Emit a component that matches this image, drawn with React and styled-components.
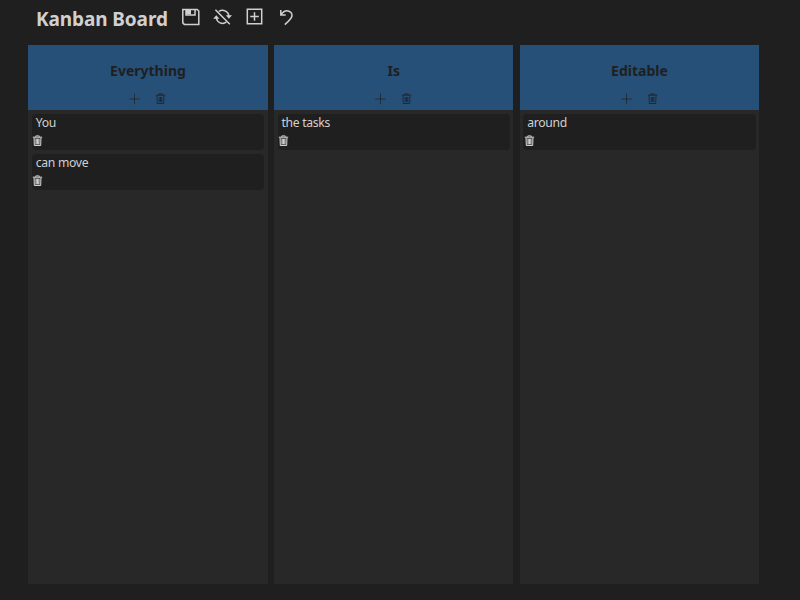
import React from "react";
import styled, { createGlobalStyle } from "styled-components";

const GlobalStyle = createGlobalStyle`
  * { box-sizing: border-box; }
  body { margin: 0; background: #1f1f1f; overflow: hidden; }
`;

const Page = styled.main`
  height: 600px;
  padding: 0 41px 0 28.4px;
  background: #1f1f1f;
  color: #d0d0d0;
  font-family: "Noto Sans", sans-serif;
`;

const Toolbar = styled.header`
  display: flex;
  align-items: flex-start;
  height: 45px;
  padding-left: 7.6px;
`;

const BoardTitle = styled.h1`
  width: 144.8px;
  margin: 0;
  padding-top: 6px;
  font-size: 19px;
  line-height: 26px;
  letter-spacing: -0.1px;
  font-weight: 700;
  white-space: nowrap;
`;

const Tools = styled.div`
  display: flex;
  gap: 11.9px;
  padding-top: 7px;
`;

const IconButton = styled.button`
  display: flex;
  padding: 0;
  border: 0;
  background: none;
  color: inherit;
`;

const Board = styled.section`
  display: grid;
  grid-template-columns: repeat(3, 1fr);
  gap: 6.6px;
  height: 539px;
`;

const Column = styled.section`
  background: #282828;
`;

const ColumnHeader = styled.header`
  display: flex;
  flex-direction: column;
  align-items: center;
  height: 65px;
  padding-top: 16px;
  background: #265078;
  color: #1f1f1f;
`;

const ColumnTitle = styled.h2`
  margin: 0;
  font-size: 14px;
  line-height: 20px;
  font-weight: 700;
`;

const ColumnActions = styled.div`
  display: flex;
  gap: 14px;
  margin-top: 12px;
`;

const TaskList = styled.div`
  display: grid;
  gap: 4px;
  padding: 4px 3.5px;
`;

const Task = styled.article`
  height: 36px;
  border-radius: 4px;
  background: #1f1f1f;
`;

const TaskText = styled.p`
  margin: 0;
  padding-left: 3.8px;
  font-size: 12.2px;
  line-height: 18px;
  letter-spacing: -0.3px;
`;

const TaskActions = styled.div`
  display: flex;
  padding: 3px 0 0 0.5px;
`;

const Drawing = styled.svg`
  display: block;
  flex: none;
  fill: none;
  stroke: currentColor;
  stroke-width: ${(p) => p.$weight || 1.5};
`;

const SaveIcon = () => (
  <Drawing width="20" height="20" viewBox="0 0 20 20">
    <path d="M1.8 2.4H16.2L17.8 4V17.4H3.3L1.8 15.9Z" />
    <path d="M5 2.4V8H14V2.4" />
    <path d="M5 2.4H10V7.4H5Z" fill="currentColor" stroke="none" />
  </Drawing>
);

const SyncOffIcon = () => (
  <Drawing width="20" height="20" viewBox="0 0 20 20" $weight={1.5}>
    <path d="M5.8 4.5A6.4 6.4 0 0 1 15.9 9M13.3 15.2A6.4 6.4 0 0 1 3.3 11M2.4 2.8L16.8 17.2" />
    <path d="M12.8 8.3H19L15.9 11.7ZM.2 11.8H6.4L3.3 8.3Z" fill="currentColor" stroke="none" />
  </Drawing>
);

const AddBoxIcon = () => (
  <Drawing width="20" height="20" viewBox="0 0 20 20">
    <path d="M2.3 2.3H16.7V16.7H2.3ZM9.5 5.2V13.8M5.2 9.5H13.8" />
  </Drawing>
);

const UndoIcon = () => (
  <Drawing width="20" height="20" viewBox="0 0 20 20" $weight={1.5}>
    <path d="M4.8 3V7.9H9.7M5 7.7C7 4.8 10.2 3.1 13 4.2C16.5 5.5 16.9 8.8 14.6 11.7C13.1 13.7 11.1 15.5 8.8 17.6" />
  </Drawing>
);

const PlusIcon = () => (
  <Drawing width="12" height="12" viewBox="0 0 12 12" $weight={0.7}>
    <path d="M5.5 .8V11.2M.3 6H10.7" />
  </Drawing>
);

const TrashIcon = ({ weight = 1, filled }) => (
  <Drawing width="11" height="12" viewBox="0 0 11 12" $weight={weight}>
    {filled && <path d="M2 2.5H9L8.7 10.7H2.3Z" fill="currentColor" fillOpacity=".35" stroke="none" />}
    <path d="M.8 2.2H10.2M3.8 2.2V.9H7.2V2.2M2 2.6L2.3 10.5H8.7L9 2.6M4.2 4V9.1M5.5 4V9.1M6.8 4V9.1" />
  </Drawing>
);

const tools = [
  ["Save", SaveIcon],
  ["Stop sync", SyncOffIcon],
  ["Add column", AddBoxIcon],
  ["Undo", UndoIcon],
];

const columns = [
  { title: "Everything", tasks: ["You", "can move"] },
  { title: "Is", tasks: ["the tasks"] },
  { title: "Editable", tasks: ["around"] },
];

export default function App() {
  return (
    <Page>
      <GlobalStyle />
      <Toolbar>
        <BoardTitle>Kanban Board</BoardTitle>
        <Tools>
          {tools.map(([label, Icon]) => (
            <IconButton key={label} aria-label={label}><Icon /></IconButton>
          ))}
        </Tools>
      </Toolbar>
      <Board>
        {columns.map(({ title, tasks }) => (
          <Column key={title}>
            <ColumnHeader>
              <ColumnTitle>{title}</ColumnTitle>
              <ColumnActions>
                <IconButton aria-label="Add task"><PlusIcon /></IconButton>
                <IconButton aria-label="Delete column"><TrashIcon weight={0.8} /></IconButton>
              </ColumnActions>
            </ColumnHeader>
            <TaskList>
              {tasks.map((text) => (
                <Task key={text}>
                  <TaskText>{text}</TaskText>
                  <TaskActions>
                    <IconButton aria-label="Delete task"><TrashIcon filled /></IconButton>
                  </TaskActions>
                </Task>
              ))}
            </TaskList>
          </Column>
        ))}
      </Board>
    </Page>
  );
}
